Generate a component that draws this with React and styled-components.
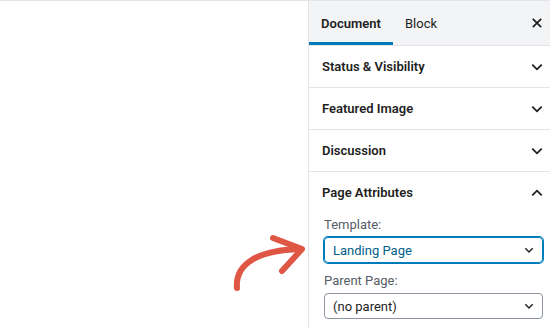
import React, { useState } from 'react';
import styled, { createGlobalStyle, css } from 'styled-components';

const Global = createGlobalStyle`
  html, body { margin: 0; padding: 0; background: #fff; }
  body {
    font-family: Roboto, "Liberation Sans", Arial, sans-serif;
    color: #1e1e1e;
    -webkit-font-smoothing: antialiased;
  }
`;

const Page = styled.div`
  display: flex;
  width: 550px;
  height: 328px;
  border-top: 1px solid #e2e4e7;
  box-sizing: border-box;
  overflow: hidden;
`;

const Canvas = styled.div`
  flex: 1;
  position: relative;
`;

const Arrow = styled.svg`
  position: absolute;
  left: 226px;
  top: 229px;
`;

const Sidebar = styled.aside`
  width: 241px;
  border-left: 1px solid #e2e4e7;
  display: flex;
  flex-direction: column;
  overflow: hidden;

  & > * { flex-shrink: 0; }
`;

const Header = styled.div`
  display: flex;
  align-items: stretch;
  height: 44px;
  background: #f3f4f5;
  border-bottom: 1px solid #e2e4e7;
`;

const TabButton = styled.button`
  border: 0;
  background: none;
  font: inherit;
  font-size: 13px;
  font-weight: ${p => (p.active ? 600 : 400)};
  color: #1e1e1e;
  padding: 0;
  width: ${p => p.w}px;
  cursor: pointer;
  ${p => p.active && css`
    box-shadow: inset 0 -3px 0 #007cba;
  `}
`;

const Spacer = styled.div`
  flex: 1;
`;

const Close = styled.button`
  border: 0;
  background: none;
  width: 26px;
  display: flex;
  align-items: center;
  justify-content: center;
  padding: 0;
`;

const Panel = styled.div`
  border-bottom: ${p => (p.last ? 'none' : '1px solid #e2e4e7')};
`;

const PanelTitle = styled.button`
  display: flex;
  align-items: center;
  justify-content: space-between;
  width: 100%;
  height: 41px;
  border: 0;
  background: none;
  padding: 0 7px 0 13px;
  font: inherit;
  font-size: 13px;
  font-weight: 600;
  color: #1e1e1e;
  cursor: pointer;
`;

const PanelBody = styled.div`
  padding: 4px 7px 12px 15px;
  display: flex;
  flex-direction: column;
`;

const Label = styled.label`
  font-size: 13px;
  color: #555d66;
  line-height: 16px;
  margin: ${p => (p.first ? 0 : 10)}px 0 4px;
`;

const Select = styled.div`
  display: flex;
  align-items: center;
  justify-content: space-between;
  height: 26px;
  box-sizing: border-box;
  border: 1px solid ${p => (p.focused ? '#007cba' : '#8d96a0')};
  box-shadow: ${p => (p.focused ? '0 0 0 1px #007cba' : 'none')};
  border-radius: 4px;
  padding: 0 8px 0 8px;
  font-size: 13px;
  color: ${p => (p.focused ? '#016087' : '#1e1e1e')};
`;

const Chevron = ({ up }) => (
  <svg width="12" height="12" viewBox="0 0 12 12" fill="none">
    <path
      d={up ? 'M1.3 8.4L6 3.7l4.7 4.7' : 'M1.3 3.6L6 8.3l4.7-4.7'}
      stroke="#1e1e1e"
      strokeWidth="1.8"
    />
  </svg>
);

const SmallChevron = () => (
  <svg width="10" height="10" viewBox="0 0 10 10" fill="none">
    <path d="M1.3 3.2L5 6.9l3.7-3.7" stroke="#1e1e1e" strokeWidth="1.4" />
  </svg>
);

const panels = ['Status & Visibility', 'Featured Image', 'Discussion'];

const App = () => {
  const [tab, setTab] = useState(0);

  return (
    <>
      <Global />
      <Page>
        <Canvas>
          <Arrow width="90" height="70" viewBox="0 0 90 70">
            <path
              d="M11 58 C 9 35, 30 20, 75 19"
              stroke="#df5645"
              strokeWidth="6"
              fill="none"
              strokeLinecap="round"
            />
            <path
              d="M47 8 L 76 19 L 56 41"
              stroke="#df5645"
              strokeWidth="6"
              fill="none"
              strokeLinecap="round"
              strokeLinejoin="round"
            />
          </Arrow>
        </Canvas>
        <Sidebar>
          <Header>
            <TabButton w={84} active={tab === 0} onClick={() => setTab(0)}>Document</TabButton>
            <TabButton w={56} active={tab === 1} onClick={() => setTab(1)}>Block</TabButton>
            <Spacer />
            <Close aria-label="Close">
              <svg width="12" height="12" viewBox="0 0 12 12">
                <path d="M1.8 1.8l8.4 8.4M10.2 1.8l-8.4 8.4" stroke="#1e1e1e" strokeWidth="1.7" />
              </svg>
            </Close>
          </Header>
          {panels.map(title => (
            <Panel key={title}>
              <PanelTitle>
                {title}
                <Chevron />
              </PanelTitle>
            </Panel>
          ))}
          <Panel last>
            <PanelTitle>
              Page Attributes
              <Chevron up />
            </PanelTitle>
            <PanelBody>
              <Label first>Template:</Label>
              <Select focused>
                Landing Page
                <SmallChevron />
              </Select>
              <Label>Parent Page:</Label>
              <Select>
                (no parent)
                <SmallChevron />
              </Select>
            </PanelBody>
          </Panel>
        </Sidebar>
      </Page>
    </>
  );
};

export default App;
